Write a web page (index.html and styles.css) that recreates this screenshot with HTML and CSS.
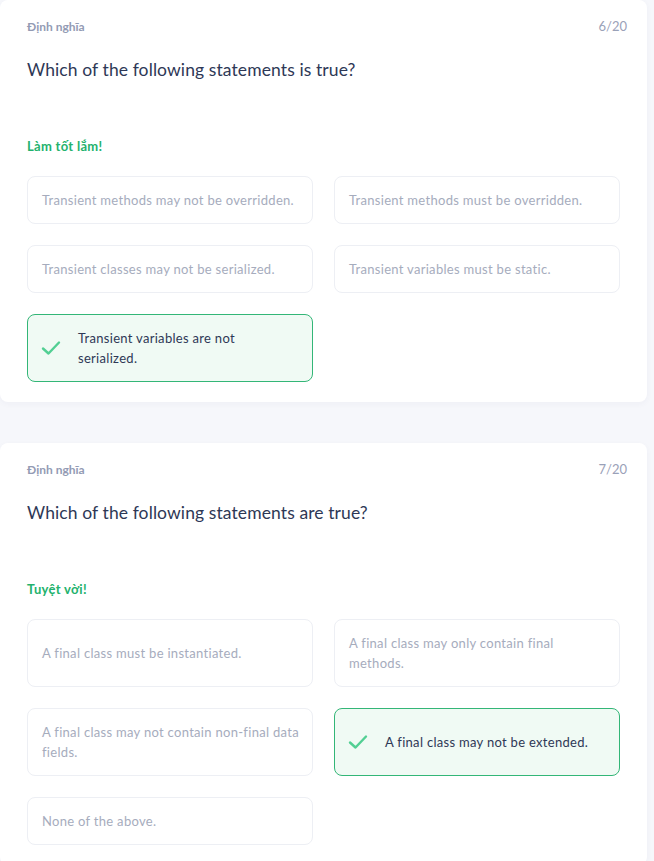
FILE: index.html
```html
<!DOCTYPE html>
<html lang="vi">
<head>
<meta charset="utf-8">
<link rel="stylesheet" href="styles.css">
</head>
<body>
<div class="page">
  <section class="card">
    <div class="card-head">
      <span class="label">Định nghĩa</span>
      <span class="count">6/20</span>
    </div>
    <h2 class="question">Which of the following statements is true?</h2>
    <div class="feedback">Làm tốt lắm!</div>
    <div class="options">
      <div class="option">Transient methods may not be overridden.</div>
      <div class="option">Transient methods must be overridden.</div>
      <div class="option">Transient classes may not be serialized.</div>
      <div class="option">Transient variables must be static.</div>
      <div class="option correct">
        <svg class="check" viewBox="0 0 20 16" width="20" height="16"><path d="M2 8.5 L7.5 13.5 L18 2.5" fill="none" stroke="#52cf93" stroke-width="2.4" stroke-linecap="round" stroke-linejoin="round"/></svg>
        <span>Transient variables are not serialized.</span>
      </div>
    </div>
  </section>

  <section class="card">
    <div class="card-head">
      <span class="label">Định nghĩa</span>
      <span class="count">7/20</span>
    </div>
    <h2 class="question">Which of the following statements are true?</h2>
    <div class="feedback">Tuyệt vời!</div>
    <div class="options">
      <div class="option">A final class must be instantiated.</div>
      <div class="option">A final class may only contain final methods.</div>
      <div class="option">A final class may not contain non-final data fields.</div>
      <div class="option correct">
        <svg class="check" viewBox="0 0 20 16" width="20" height="16"><path d="M2 8.5 L7.5 13.5 L18 2.5" fill="none" stroke="#52cf93" stroke-width="2.4" stroke-linecap="round" stroke-linejoin="round"/></svg>
        <span>A final class may not be extended.</span>
      </div>
      <div class="option">None of the above.</div>
    </div>
  </section>
</div>
</body>
</html>
```
FILE: styles.css
```css
html, body {
  margin: 0;
  padding: 0;
  background: #f6f7fb;
}
body {
  font-family: Lato, "Noto Sans", sans-serif;
  color: #2e3856;
}
.page {
  width: 647px;
  display: flex;
  flex-direction: column;
  gap: 41px;
}
.card {
  background: #fff;
  border-radius: 8px;
  padding: 17px 27px 20px 27px;
  box-shadow: 0 2px 6px rgba(40, 50, 90, 0.04);
}
.card-head {
  display: flex;
  justify-content: space-between;
  align-items: center;
  margin-right: -7px;
  height: 18px;
}
.label {
  font-size: 12px;
  font-weight: 700;
  color: #939bb4;
}
.count {
  font-size: 13px;
  color: #9aa1b8;
}
.question {
  margin: 24px 0 0;
  font-size: 17.5px;
  font-weight: 400;
  line-height: 22px;
  letter-spacing: 0.1px;
  color: #2e3856;
}
.feedback {
  margin-top: 56px;
  font-size: 13px;
  font-weight: 700;
  line-height: 18px;
  letter-spacing: 0.3px;
  color: #23b26d;
}
.options {
  margin-top: 21px;
  display: grid;
  grid-template-columns: 1fr 1fr;
  gap: 21px 21px;
}
.option {
  display: flex;
  align-items: center;
  min-height: 48px;
  padding: 13px 10px 13px 14px;
  border: 1px solid #edeff4;
  border-radius: 8px;
  font-size: 13px;
  line-height: 20px;
  letter-spacing: 0.3px;
  color: #a6acbd;
  box-sizing: border-box;
}
.option.correct {
  background: #f0faf4;
  border-color: #33b677;
  color: #2e3856;
  padding: 13px 30px 13px 13px;
  gap: 17px;
}
.check {
  flex: none;
}
```
